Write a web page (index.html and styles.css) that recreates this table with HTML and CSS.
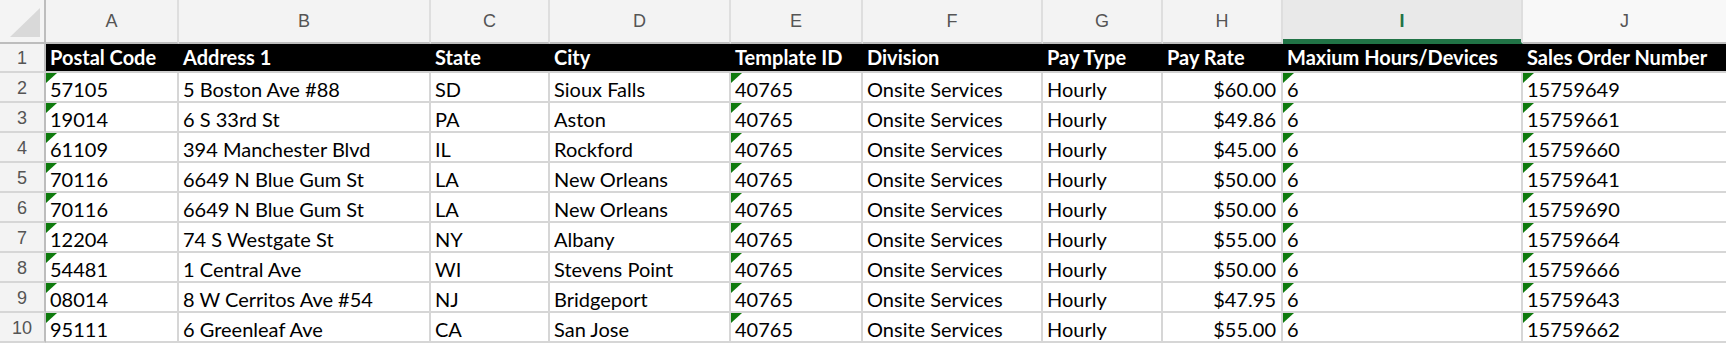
FILE: index.html
```html
<!DOCTYPE html>
<html>
<head>
<meta charset="utf-8">
<link rel="stylesheet" href="styles.css">
</head>
<body>
<div class="sheet">
  <div class="corner"><span class="corner-tri"></span></div>
  <div class="col-h">A</div>
  <div class="col-h">B</div>
  <div class="col-h">C</div>
  <div class="col-h">D</div>
  <div class="col-h">E</div>
  <div class="col-h">F</div>
  <div class="col-h">G</div>
  <div class="col-h">H</div>
  <div class="col-h col-sel">I</div>
  <div class="col-h col-last">J</div>

  <div class="row-h row-h1">1</div>
  <div class="hd">Postal Code</div>
  <div class="hd">Address 1</div>
  <div class="hd">State</div>
  <div class="hd">City</div>
  <div class="hd">Template ID</div>
  <div class="hd">Division</div>
  <div class="hd">Pay Type</div>
  <div class="hd">Pay Rate</div>
  <div class="hd">Maxium Hours/Devices</div>
  <div class="hd">Sales Order Number</div>

  <div class="row-h">2</div>
  <div class="c flag">57105</div><div class="c">5 Boston Ave #88</div><div class="c">SD</div><div class="c">Sioux Falls</div><div class="c flag">40765</div><div class="c">Onsite Services</div><div class="c">Hourly</div><div class="c num">$60.00</div><div class="c flag">6</div><div class="c flag last">15759649</div>

  <div class="row-h">3</div>
  <div class="c flag">19014</div><div class="c">6 S 33rd St</div><div class="c">PA</div><div class="c">Aston</div><div class="c flag">40765</div><div class="c">Onsite Services</div><div class="c">Hourly</div><div class="c num">$49.86</div><div class="c flag">6</div><div class="c flag last">15759661</div>

  <div class="row-h">4</div>
  <div class="c flag">61109</div><div class="c">394 Manchester Blvd</div><div class="c">IL</div><div class="c">Rockford</div><div class="c flag">40765</div><div class="c">Onsite Services</div><div class="c">Hourly</div><div class="c num">$45.00</div><div class="c flag">6</div><div class="c flag last">15759660</div>

  <div class="row-h">5</div>
  <div class="c flag">70116</div><div class="c">6649 N Blue Gum St</div><div class="c">LA</div><div class="c">New Orleans</div><div class="c flag">40765</div><div class="c">Onsite Services</div><div class="c">Hourly</div><div class="c num">$50.00</div><div class="c flag">6</div><div class="c flag last">15759641</div>

  <div class="row-h">6</div>
  <div class="c flag">70116</div><div class="c">6649 N Blue Gum St</div><div class="c">LA</div><div class="c">New Orleans</div><div class="c flag">40765</div><div class="c">Onsite Services</div><div class="c">Hourly</div><div class="c num">$50.00</div><div class="c flag">6</div><div class="c flag last">15759690</div>

  <div class="row-h">7</div>
  <div class="c flag">12204</div><div class="c">74 S Westgate St</div><div class="c">NY</div><div class="c">Albany</div><div class="c flag">40765</div><div class="c">Onsite Services</div><div class="c">Hourly</div><div class="c num">$55.00</div><div class="c flag">6</div><div class="c flag last">15759664</div>

  <div class="row-h">8</div>
  <div class="c flag">54481</div><div class="c">1 Central Ave</div><div class="c">WI</div><div class="c">Stevens Point</div><div class="c flag">40765</div><div class="c">Onsite Services</div><div class="c">Hourly</div><div class="c num">$50.00</div><div class="c flag">6</div><div class="c flag last">15759666</div>

  <div class="row-h">9</div>
  <div class="c flag">08014</div><div class="c">8 W Cerritos Ave #54</div><div class="c">NJ</div><div class="c">Bridgeport</div><div class="c flag">40765</div><div class="c">Onsite Services</div><div class="c">Hourly</div><div class="c num">$47.95</div><div class="c flag">6</div><div class="c flag last">15759643</div>

  <div class="row-h">10</div>
  <div class="c flag">95111</div><div class="c">6 Greenleaf Ave</div><div class="c">CA</div><div class="c">San Jose</div><div class="c flag">40765</div><div class="c">Onsite Services</div><div class="c">Hourly</div><div class="c num">$55.00</div><div class="c flag">6</div><div class="c flag last">15759662</div>
</div>
</body>
</html>
```

FILE: styles.css
```css
html, body {
  margin: 0;
  padding: 0;
  background: #ffffff;
}

.sheet {
  display: grid;
  grid-template-columns: 46px 133px 252px 119px 181px 132px 180px 120px 120px 240px 1fr;
  grid-template-rows: 44px 29px repeat(9, 30px);
  width: 1726px;
  font-family: Lato, "Open Sans", sans-serif;
  font-size: 20px;
  color: #000;
}

.sheet > div {
  box-sizing: border-box;
  white-space: nowrap;
  overflow: hidden;
}

/* column header band */
.corner {
  position: relative;
  background: #f4f4f4;
  border-right: 2px solid #bdbdbd;
  border-bottom: 2px solid #bdbdbd;
}
.corner-tri {
  position: absolute;
  left: 10px;
  top: 8px;
  width: 30px;
  height: 29px;
  background: #d9d9d9;
  clip-path: polygon(100% 0, 100% 100%, 0 100%);
}

.col-h {
  background: #f3f3f3;
  border-right: 2px solid #dedede;
  border-bottom: 2px solid #bdbdbd;
  text-align: center;
  font-family: "Liberation Sans", Arial, sans-serif;
  font-size: 18px;
  line-height: 42px;
  color: #555;
}
.col-sel {
  background: #e9e9e9;
  color: #217346;
  font-weight: bold;
  box-shadow: inset 0 -3px 0 #217346;
  border-bottom-color: #217346;
}
.col-last {
  background: #f8f8f8;
  border-right: none;
}

/* row numbers */
.row-h {
  background: #f3f3f3;
  border-right: 2px solid #bdbdbd;
  border-bottom: 2px solid #d6d6d6;
  text-align: center;
  font-family: "Liberation Sans", Arial, sans-serif;
  font-size: 18px;
  line-height: 30px;
  color: #555;
}
.row-h1 {
  line-height: 28px;
}

/* header data row */
.hd {
  background: #000;
  color: #fff;
  font-weight: bold;
  border-bottom: 2px solid #d0d0d0;
  padding: 1px 0 0 4px;
  line-height: 24px;
}

/* data cells */
.c {
  position: relative;
  border-right: 2px solid #d6d6d6;
  border-bottom: 2px solid #d6d6d6;
  padding: 4px 4px 0 4px;
  line-height: 24px;
}
.c.last {
  border-right: none;
}
.num {
  text-align: right;
  padding-right: 5px;
}
.flag::before {
  content: "";
  position: absolute;
  left: 0;
  top: 0;
  width: 11px;
  height: 10px;
  background: #0e7a0d;
  clip-path: polygon(0 0, 100% 0, 0 100%);
}
```
